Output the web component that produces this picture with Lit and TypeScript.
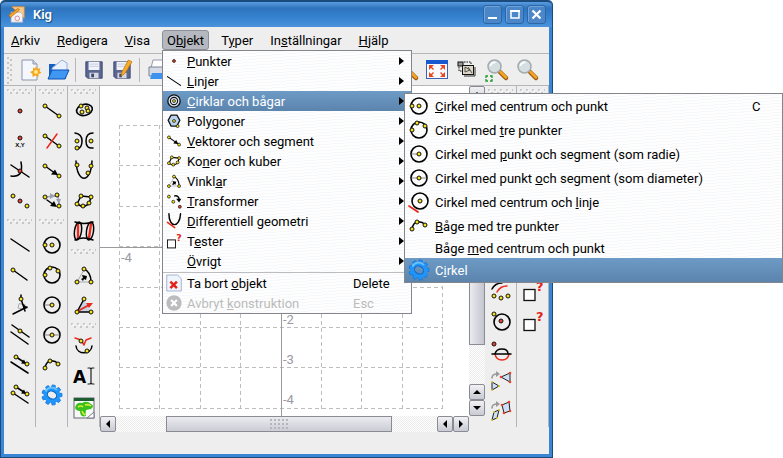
import { LitElement, html, svg, css, nothing } from "lit";
import { customElement, property } from "lit/decorators.js";

const dot = (x: number, y: number, fill = "#f5e11c") =>
  svg`<circle cx=${x} cy=${y} r="2" fill=${fill} stroke="#111" stroke-width="1"/>`;
const red = (x: number, y: number) => dot(x, y, "#e8432e");
const stroke = (d: string, color = "#000", width = 1.5) =>
  svg`<path d=${d} fill="none" stroke=${color} stroke-width=${width} stroke-linecap="round" stroke-linejoin="round"/>`;
const ring = svg`<circle cx="11" cy="11" r="8" fill="none" stroke="#000" stroke-width="1.6"/>`;
const lens = svg`
  <path d="M14 13l6 6" stroke="#9a5a10" stroke-width="4.5" stroke-linecap="round"/>
  <path d="M14.500 13l5.500 5.500" stroke="#f5a623" stroke-width="2.500" stroke-linecap="round"/>
  <circle cx="8.500" cy="7.500" r="6.500" fill="#d5dfe2" stroke="#a3abae" stroke-width="1.500"/>
  <path d="M4.500 7a4 4 0 0 1 5-3.500" fill="none" stroke="#fff" stroke-width="1.800"/>`;
const floppy = svg`
  <path d="M2 2h18v18H4l-2-2z" fill="#5b6691" stroke="#3d466b"/>
  <path d="M5 2h12v9H5z" fill="#f1f3fa"/><path d="M6 4.500h10M6 7h10" stroke="#c5cbe0"/>
  <path d="M6 14h10v6H6z" fill="#d5d8e2"/><path d="M8 15h3v4H8z" fill="#3d466b"/>`;
const teeth = [0, 40, 80, 120, 160, 200, 240, 280, 320];

const icons: Record<string, unknown> = {
  point: red(11, 11),
  pointXY: svg`${red(11, 8)}<text x="11" y="17" text-anchor="middle" font-family="Liberation Sans" font-size="6" font-weight="bold">X,Y</text>`,
  intersection: svg`${stroke("M2 5L20 17")}${stroke("M2 16Q15 18 12 2")}${red(11, 11)}`,
  midpoint: svg`${dot(4, 6)}${red(11, 11)}${dot(18, 16)}`,
  line: stroke("M2 5L20 17"),
  ray: svg`${stroke("M4 6L18 16")}${dot(4, 6)}`,
  perpendicular: svg`${stroke("M10 10l-1 4l5 1l2-4z", "#a5a9b0", 1)}${stroke("M4 20L18 13M12 5L16 17M12 1v3")}<path d="M14 10l5 4l-5 1z"/>${dot(12, 5)}`,
  parallel: svg`${stroke("M3 1L20 13M2 8L19 20")}${dot(11, 7)}`,
  parallelVector: svg`${stroke("M7 3L18 10M2 8L19 19")}<path d="M17 10l-5-.5l3-4z"/>${dot(7, 3)}${dot(18, 10)}`,
  translateVector: svg`${stroke("M7 3L18 10M4 9L19 19")}<path d="M17 10l-5-.5l3-4z"/>${dot(7, 3)}${dot(18, 10)}${dot(4, 9)}`,
  segment: svg`${stroke("M4 6L18 16")}${dot(4, 6)}${dot(18, 16)}`,
  segmentAxis: svg`${stroke("M4 6L18 16")}${stroke("M6 18L16 4", "#e92a1c")}${dot(4, 6)}${dot(18, 16)}`,
  vector: svg`${stroke("M4 6L18 16")}<path d="M17 15l-7-.5l4-5z"/>${dot(4, 6)}${dot(18, 16)}`,
  vectorSum: svg`${stroke("M4 7L15 6M17 6L18 15", "#9aa2b2")}<path d="M14 6l-5-3v6zM18 14l-3-5h5z" fill="#9aa2b2"/>${stroke("M6 10L13 15")}<path d="M16 17l-7-1l4-5z"/>${dot(4, 7)}${dot(16, 5)}${dot(18, 16)}`,
  circlePoint: svg`${ring}${dot(11, 11)}${dot(4, 11)}`,
  circleThree: svg`${ring}${dot(9, 4)}${dot(17, 7)}${dot(4, 11)}`,
  circleRadius: svg`${ring}${stroke("M4 11h7", "#888", 1)}${dot(11, 11)}`,
  circleDiameter: svg`${ring}${stroke("M4 11h14", "#888", 1)}${dot(11, 11)}`,
  circleLine: svg`<circle cx="12" cy="10" r="8" fill="none" stroke="#000" stroke-width="1.6"/>${stroke("M1 15L10 21", "#e92a1c", 1.8)}${dot(12, 10)}`,
  arc: svg`${stroke("M4 14Q5 8 9 7T18 10")}${dot(4, 14)}${dot(9, 7)}${dot(17, 10)}`,
  gear: svg`<g transform="translate(11 11)">
    ${teeth.map((a) => svg`<path d="M-2 -7l.5-3h3l.5 3z" fill="#1f96fb" stroke="#1576d8" stroke-width=".8" transform=${`rotate(${a + 10})`}/>`)}
    <ellipse rx="6.500" ry="5.500" transform="rotate(30)" fill="none" stroke="#1f96fb" stroke-width="4"/>
    <ellipse rx="4.800" ry="3.800" transform="rotate(30)" fill="none" stroke="#1565bd" stroke-width="1"/>
    <path d="M-6.500 -3.500A7 7 0 0 1 5 -5" fill="none" stroke="#6cc3ff" stroke-width="1.800"/></g>`,
  conic: svg`<ellipse cx="11.500" cy="10" rx="8" ry="5.500" transform="rotate(-15 11 10)" fill="none" stroke="#000" stroke-width="1.600"/>${dot(8, 6)}${dot(14, 8)}${dot(9, 12)}${dot(15, 11)}`,
  hyperbola: svg`${stroke("M2 3Q9 4 9 11T4 19M20 3Q13 3 13 11T20 18")}${dot(4, 11)}${dot(4, 18)}${dot(18, 11)}`,
  parabola: svg`${stroke("M3 1C4 24 18 24 19 1")}${dot(4, 5)}${dot(18, 6)}${dot(15, 13)}`,
  cubic: svg`${stroke("M8 6L18 7L16 14L10 17L4 14Z")}${dot(8, 6)}${dot(18, 7)}${dot(4, 14)}${dot(16, 13)}${dot(10, 16)}`,
  radical: svg`${stroke("M5 18V4M16 18L18 4", "#e92a1c", 2.400)}<ellipse cx="5" cy="11" rx="3.500" ry="9" transform="rotate(8 5 11)" fill="none" stroke="#000" stroke-width="1.500"/><ellipse cx="17" cy="11" rx="3.500" ry="9" transform="rotate(8 17 11)" fill="none" stroke="#000" stroke-width="1.500"/>${stroke("M2 2Q11 5 20 2M2 20Q10 16 20 20")}`,
  angle: svg`${stroke("M11 6L4 18H18", "#a5a9b0", 1)}${stroke("M11 5Q18 8 18 18")}<path d="M9 11l5 1l-1 4l-2-1l-1 2l-2-2l2-1z"/>${dot(11, 5)}${dot(4, 18)}${dot(18, 18)}`,
  angleSize: svg`<path d="M11 6L18 18H4z" fill="#c5d3e4"/>${stroke("M11 5L4 18H18")}${stroke("M5 17L16 11", "#e92a1c", 1.8)}<path d="M13 9l7 0l-4 5z" fill="#e92a1c"/>${dot(11, 5)}${dot(4, 18)}${dot(18, 18)}`,
  tangent: svg`${stroke("M2 0L8 2L11 7L13 2L18 0", "#e92a1c")}${stroke("M3 8C4 17 18 17 19 8")}${dot(8, 3)}${dot(14, 13)}`,
  text: svg`<text x="0" y="15" font-family="DejaVu Sans" font-weight="bold" font-size="17">A</text>${stroke("M15 0h2l1 1l1-1h2M18 1v14M15 16h2l1-1l1 1h2", "#222", 1.2)}`,
  python: svg`<rect x="1" y="0" width="20" height="20" fill="#f7f9f7" stroke="#667"/><path d="M1 0h20v3H1z" fill="#1d5e31"/>
    <path d="M2 10Q3 4 9 5Q14 2 18 6Q22 8 18 11L13 12Q12 16 13 18Q7 20 7 13Q3 13 2 10" fill="#39bf1e"/><path d="M12 7q4-1 6 1M5 9q3-2 5 0M9 13q1 3 3 4" fill="none" stroke="#d9ec37" stroke-width="1.600"/><path d="M14 20l7-6v6z" fill="#fff" stroke="#778"/>`,
  mapArc: svg`${stroke("M2 9Q5 3 12 3")}${stroke("M7 12Q10 6 17 6", "#e92a1c")}${dot(4, 16)}${dot(11, 18)}${dot(18, 16)}`,
  mapCircle: svg`<circle cx="12" cy="12" r="8" fill="none" stroke="#000" stroke-width="1.600"/>${dot(4, 4)}${red(11, 11)}`,
  project: svg`${stroke("M5 14Q6 20 12 20T19 14", "#e92a1c")}${stroke("M5 14Q6 9 12 9T18 14M2 14H21")}${red(4, 4)}`,
  rotate: svg`${stroke("M2 8Q2 4 7 4", "#999", 1.6)}<path d="M6 1l4 3l-4 3z" fill="#999"/>
    <path d="M11 7L20 3V12zM2 12L9 16L2 20z" fill="#cfdff5" stroke="#222"/>${[[11, 7], [20, 3], [20, 12]].map(([x, y]) => svg`<circle cx=${x} cy=${y} r="1.300" fill="#e8432e"/>`)}${[[2, 12], [9, 16], [2, 20]].map(([x, y]) => svg`<circle cx=${x} cy=${y} r="1" fill="#d8c61c"/>`)}`,
  affine: svg`${stroke("M2 8Q2 4 7 4", "#999", 1.6)}<path d="M6 1l4 3l-4 3z" fill="#999"/>
    <path d="M12 5L19 2L20 11L14 13zM4 12L9 10L7 18L2 20z" fill="#cfdff5" stroke="#222"/>${[[12, 5], [19, 2], [20, 11], [14, 13]].map(([x, y]) => svg`<circle cx=${x} cy=${y} r="1.300" fill="#e8432e"/>`)}${[[4, 12], [9, 10], [7, 18], [2, 20]].map(([x, y]) => svg`<circle cx=${x} cy=${y} r="1" fill="#d8c61c"/>`)}`,
  test: svg`<rect x="2" y="9.500" width="11" height="11" fill="#fff" stroke="#111" stroke-width="1.300"/><text x="14" y="11" font-family="DejaVu Sans" font-size="13" font-weight="bold" fill="#e3221a">?</text>`,
  circles: svg`<circle cx="11" cy="11" r="8.500" fill="#d8e4f3" stroke="#111" stroke-width="1.800"/><circle cx="11" cy="11" r="5" fill="none" stroke="#111" stroke-width="1.500"/>${dot(11, 11)}`,
  polygon: svg`<path d="M7 3L15 3L19 10L15 18L7 18L3 10Z" fill="#b9d3f0" stroke="#111" stroke-width="1.800"/>${dot(11, 11)}${dot(16, 18)}`,
  transform: svg`${dot(4, 5)}${dot(10, 12)}${red(19, 19)}${stroke("M12 4Q17 3 18 8", "#000", 2)}<path d="M14 8h7l-3 5z"/>`,
  differential: svg`${stroke("M4 1C4 21 19 21 20 1", "#000", 2)}${stroke("M2 13L12 20", "#e92a1c", 2.2)}`,
  remove: svg`<path d="M1 0h15l5 5v17H1z" fill="#eef4fc" stroke="#8d9cc0"/><path d="M6 9l9 9M15 9l-9 9" stroke="#e3221a" stroke-width="3.500"/>`,
  cancel: svg`<circle cx="11" cy="11" r="10.500" fill="#bcbcbc"/><path d="M7 7l8 8M15 7l-8 8" stroke="#fff" stroke-width="3"/>`,
  none: nothing,
  fileNew: svg`<path d="M3 1h11l4 4v16H3z" fill="#f4f7fd" stroke="#8d95a8"/><path d="M14 1v4h4" fill="#ccd5e6" stroke="#8d95a8"/>
    <path d="M17 7l1.500 3l3-1l-1 3l2 2l-3 1v3l-3-1.500l-3 1.500v-3l-2.500-2l3-1.500v-3l2 1z" fill="#f7a71c"/><circle cx="17" cy="13" r="2" fill="#ffe98a"/>`,
  fileOpen: svg`<path d="M2 20V5h6l2 2h9v13z" fill="#1660c4"/><path d="M5 9L15 1l5 3v9H5z" fill="#e8f1fd" stroke="#7c9fd0" stroke-width=".8"/><path d="M1 20L5 11h17l-4 9z" fill="#3f97f2" stroke="#0c50b4"/>`,
  save: floppy,
  saveAs: svg`${floppy}<path d="M18 0l4 2l-8 13l-4 3l1-5z" fill="#f8ab24" stroke="#b36c0a" stroke-width=".7"/>`,
  print: svg`<path d="M6 1h12l-2 8H4z" fill="#fff" stroke="#99a"/><path d="M2 8h18v9H2z" fill="#d6dbe6" stroke="#7a8194"/><path d="M5 14h12l2 6H3z" fill="#3b93ee"/>`,
  zoom: lens,
  fullscreen: svg`<rect x=".5" y="1.500" width="21" height="18" fill="#f8f9fc" stroke="#3b62b0"/><path d="M0 1h22v4H0z" fill="#1859cf"/>
    <path d="M3 6h5L6 8l2 2l-1 1l-2-2l-2 2zM19 6h-5l2 2l-2 2l1 1l2-2l2 2zM3 18h5l-2-2l2-2l-1-1l-2 2l-2-2zM19 18h-5l2-2l-2-2l1-1l2 2l2-2z" fill="#e8481f"/>`,
  showHidden: svg`<rect x="2" y="3" width="5" height="4" fill="#999" stroke="#111"/><path d="M8 3h7v3M3 8v4h4" fill="none" stroke="#111" stroke-dasharray="1.500 1"/><rect x="6.500" y="6.500" width="11" height="9" fill="#ddd6c6" stroke="#111"/><path d="M9 8v5l5-2zM12 8l4 6" fill="none" stroke="#333" stroke-width=".8"/><path d="M8 17h11V8" fill="none" stroke="#333"/>`,
  zoomArea: svg`${lens}<path d="M0 19v-2h2M4 17h2v2M0 20v2h2M4 22h2v-2" fill="none" stroke="#1d9a2c" stroke-width="1.300"/>`,
};

const icon = (name: string) =>
  html`<svg class="icon" viewBox="0 0 22 22" aria-hidden="true">${icons[name]}</svg>`;

/** Turns "A&rkiv" into a label whose marked letter is underlined. */
const label = (text: string) => {
  const i = text.indexOf("&");
  return i < 0 ? html`${text}` : html`${text.slice(0, i)}<u>${text[i + 1]}</u>${text.slice(i + 2)}`;
};

interface Entry {
  icon: string;
  text: string;
  key?: string;
  kind?: "arrow" | "slim" | "disabled";
  open?: boolean;
}

const circleMenu: Entry[] = [
  { icon: "circlePoint", text: "&Cirkel med centrum och punkt", key: "C" },
  { icon: "circleThree", text: "Cirkel med &tre punkter" },
  { icon: "circleRadius", text: "Cirkel med &punkt och segment (som radie)" },
  { icon: "circleDiameter", text: "Cirkel med punkt &och segment (som diameter)" },
  { icon: "circleLine", text: "Cirkel med centrum och &linje" },
  { icon: "arc", text: "&Båge med tre punkter" },
  { icon: "none", text: "Båge &med centrum och punkt", kind: "slim" },
  { icon: "gear", text: "C&irkel", open: true },
];

const objectMenu: Entry[] = [
  { icon: "point", text: "&Punkter", kind: "arrow" },
  { icon: "line", text: "&Linjer", kind: "arrow" },
  { icon: "circles", text: "&Cirklar och bågar", kind: "arrow", open: true },
  { icon: "polygon", text: "Poly&goner", kind: "arrow" },
  { icon: "vector", text: "&Vektorer och segment", kind: "arrow" },
  { icon: "cubic", text: "Ko&ner och kuber", kind: "arrow" },
  { icon: "angle", text: "Vinkl&ar", kind: "arrow" },
  { icon: "transform", text: "&Transformer", kind: "arrow" },
  { icon: "differential", text: "&Differentiell geometri", kind: "arrow" },
  { icon: "test", text: "T&ester", kind: "arrow" },
  { icon: "none", text: "&Övrigt", kind: "arrow" },
];
const objectActions: Entry[] = [
  { icon: "remove", text: "Ta bort &objekt", key: "Delete" },
  { icon: "cancel", text: "Avbryt &konstruktion", key: "Esc", kind: "disabled" },
];

const iconStyle = css`
  .icon { display: block; width: 22px; height: 22px; overflow: visible; flex: none; }
  button { font: inherit; color: inherit; border: 0; padding: 0; margin: 0; background: none; text-align: left; }
`;

@customElement("kig-menu")
class KigMenu extends LitElement {
  @property({ type: Boolean, reflect: true }) roomy = false;
  @property({ attribute: false }) groups: Entry[][] = [];

  static styles = [iconStyle, css`
    :host {
      display: block; box-sizing: border-box; border: 1px solid #85868c;
      background: repeating-linear-gradient(176deg, #fefefe 0 2px, #f7f8f9 2px 3px);
      color: #000;
    }
    .row { position: relative; }
    .item {
      display: flex; align-items: center; width: 100%; height: 20px;
      padding: 0 7px 0 3px; gap: 5px; white-space: nowrap;
    }
    .item .icon { width: 16px; height: 16px; }
    .name { flex: 1; }
    .name, .key { padding-top: 2px; }
    .key { width: 38px; margin-right: 13px; }
    .open { background: linear-gradient(#6d9bc6, #5c84ad); color: #fff; }
    .disabled { color: #bbb; }
    .chevron { border: 4px solid transparent; border-left: 5px solid #000; border-right: 0; }
    .group + .group { border-top: 1px solid #bdbdc1; margin-top: 1px; }
    :host([roomy]) .item { height: 24px; padding-left: 3px; }
    :host([roomy]) .item.slim { height: 20px; }
    :host([roomy]) .item .icon { width: 22px; height: 22px; }
    :host([roomy]) .key { width: 10px; }
    .sub { position: absolute; left: calc(100% - 7px); top: 2px; width: 379px; z-index: 1; }
  `];

  render() {
    return this.groups.map((group) => html`<div class="group">${group.map((e) => html`
      <div class="row">
        <button class="item ${e.kind ?? ""} ${e.open ? "open" : ""}" ?disabled=${e.kind === "disabled"}>
          ${icon(e.icon)}<span class="name">${label(e.text)}</span>
          ${e.key ? html`<span class="key">${e.key}</span>` : nothing}
          ${e.kind === "arrow" ? html`<span class="chevron"></span>` : nothing}
        </button>
        ${e.kind === "arrow" && e.open ? html`<kig-menu class="sub" roomy .groups=${[circleMenu]}></kig-menu>` : nothing}
      </div>`)}</div>`);
  }
}

@customElement("kig-palette")
class KigPalette extends LitElement {
  @property({ attribute: false }) groups: string[][] = [];

  static styles = [iconStyle, css`
    :host { display: block; width: 31px; flex: none; border-right: 1px solid #b3b4b8; margin-bottom: 5px; }
    .grip { display: block; height: 14px; padding: 0 3px; }
    .grip svg { display: block; width: 100%; height: 14px; }
    .group:first-child .grip, .group:first-child svg.dots { height: 10px; }
    .tool { display: flex; align-items: center; justify-content: center; width: 100%; height: 30px; }
  `];

  render() {
    return this.groups.map((group) => html`<div class="group">
      <div class="grip"><svg class="dots" aria-hidden="true">
        <path d="M0 4h27M3 7h24" stroke="#c6c6c8" stroke-width="2" stroke-dasharray="2 4" fill="none"/>
        <path d="M1 5h26" stroke="#fff" stroke-dasharray="2 4" fill="none"/></svg></div>
      ${group.map((name) => html`<button class="tool" aria-label=${name}>${icon(name)}</button>`)}
    </div>`);
  }
}

const columns = [0, 1, 2, 3, 4, 5, 6, 7, 8].map((i) => Math.round(i * 40.4) + 19.5);
const rows = [0, 1, 2, 3, 4, 5, 6, 7].map((i) => Math.round(i * 40.4) + 39.5);

@customElement("app-root")
class AppRoot extends LitElement {
  static styles = [iconStyle, css`
    :host { display: block; min-height: 100vh; background: #fff; overflow: hidden; font: 13px/20px Roboto, "Noto Sans", sans-serif; color: #000; }
    .window {
      display: flex; flex-direction: column; box-sizing: border-box; min-height: 100vh;
      width: calc(100% - 230px); border: 1px solid #1b4a7c; border-top: 0; border-radius: 5px 5px 0 0;
      background: #3a86d4; padding: 0 3px 3px;
    }
    .title {
      display: flex; align-items: center; gap: 3px; height: 27px; margin: 0 -3px; padding: 0 6px 0 7px;
      box-sizing: border-box; border-top: 2px solid #1b4a7c; border-radius: 5px 5px 0 0;
      background: linear-gradient(#5a9ce0, #2f74bd 25%, #3581cf 60%, #4a93dc); color: #fff;
    }
    .title .icon { width: 17px; height: 17px; }
    .title h1 { flex: 1; margin: 0 0 0 5px; font-size: 13px; font-weight: 600; text-shadow: 1px 1px 1px #1b4a7c; }
    .title button { width: 19px; height: 19px; border-radius: 3px; background: #4a86c8; border: 1px solid #2b67a8; box-shadow: inset 1px 1px #6fa3d9; }
    .title button svg { display: block; width: 17px; height: 17px; }
    .body { flex: 1; display: flex; flex-direction: column; background: #eeeeef; }
    .menubar { display: flex; align-items: center; gap: 7px; height: 26px; padding-left: 2px; }
    .entry { position: relative; }
    .entry > button { display: block; padding: 1px 4px 0; line-height: 17px; border: 1px solid transparent; border-radius: 3px; }
    .entry > .active { background: #b5b8bf; border-color: #8d9097; }
    .popup { position: absolute; left: 0; top: 100%; width: 250px; z-index: 2; }
    .toolbar { display: flex; align-items: center; height: 33px; box-sizing: border-box; border-top: 1px solid #b5b6b9; border-bottom: 1px solid #b5b6b9; padding: 0 8px 0 3px; }
    .grip { width: 5px; height: 28px; margin-right: 4px; flex: none; }
    .toolbar button { display: flex; justify-content: center; width: 28px; flex: none; }
    .toolbar .small .icon { width: 20px; height: 20px; }
    .toolbar hr { width: 1px; height: 24px; border: 0; margin: 0 4px 0 3px; background: #b5b6b9; flex: none; }
    .right { display: flex; gap: 2px; margin-left: auto; }
    .work { display: flex; }
    .view { flex: 1; min-width: 0; display: grid; grid-template-columns: 1fr 16px; grid-template-rows: 330px 16px; }
    .canvas { display: block; width: 100%; height: 330px; background: #fff; box-sizing: border-box; }
    .canvas text { font-size: 13px; fill: #9a9aa0; }
    .bar { display: flex; background: repeating-conic-gradient(#fff 0 25%, #ebebec 0 50%) 0 0 / 2px 2px; }
    .vertical { flex-direction: column; }
    .bar button {
      display: flex; align-items: center; justify-content: center; width: 16px; height: 16px; flex: none; box-sizing: border-box;
      border: 1px solid #8b8c93; border-radius: 2px; background: linear-gradient(#f2f2f5, #c9cad2);
    }
    .thumb { display: flex; align-items: center; justify-content: center; box-sizing: border-box; border: 1px solid #8b8c93; background: linear-gradient(#ebebf0, #cbccd5); }
    .horizontal .thumb { flex: 226; }
    .vertical .thumb { flex: 243; background: linear-gradient(90deg, #ebebf0, #c4c5cf); }
    .gap-left { flex: 50; }
    .gap-right { flex: 45; }
    .gap-below { flex: 39; }
    .ridges { width: 18px; height: 10px; background: radial-gradient(circle at 1px 1px, #b4b5be 1px, transparent 1px) 0 0 / 4px 4px; }
  `];

  private arrow(d: string, name: string) {
    return html`<button aria-label=${name}><svg width="8" height="8" viewBox="0 0 8 8"><path d=${d}/></svg></button>`;
  }

  private tools(names: string[], cls = "") {
    return names.map((n) => html`<button class=${cls} aria-label=${n}>${icon(n)}</button>`);
  }

  render() {
    return html`<div class="window">
      <header class="title">
        <svg class="icon" viewBox="0 0 22 22" aria-hidden="true"><path d="M5 1h16v15z" fill="#f7c98a" stroke="#e08a2a"/><path d="M4 8h12l3 3v10H4z" fill="#f3f3f6" stroke="#b7b2ba"/><circle cx="12" cy="16" r="3" fill="none" stroke="#c78"/><path d="M1 12L13 3l2 2L3 15z" fill="#f5a623" stroke="#b3590c" stroke-width=".8"/></svg>
        <h1>Kig</h1>
        <button aria-label="Minimera"><svg viewBox="0 0 17 17"><path d="M4 12h9" stroke="#fff" stroke-width="2"/></svg></button>
        <button aria-label="Maximera"><svg viewBox="0 0 17 17"><path d="M5 5h8v7H5z" fill="none" stroke="#fff" stroke-width="1.500"/><path d="M4 5h10" stroke="#fff" stroke-width="2"/></svg></button>
        <button aria-label="Stäng"><svg viewBox="0 0 17 17"><path d="M4.500 4.500l8 8M12.500 4.500l-8 8" stroke="#fff" stroke-width="2.200"/></svg></button>
      </header>
      <div class="body">
        <nav class="menubar">
          ${["&Arkiv", "&Redigera", "&Visa", "O&bjekt", "T&yper", "In&ställningar", "&Hjälp"].map((t) => html`
            <div class="entry"><button class=${t === "O&bjekt" ? "active" : ""}>${label(t)}</button>
            ${t === "O&bjekt" ? html`<kig-menu class="popup" .groups=${[objectMenu, objectActions]}></kig-menu>` : nothing}</div>`)}
        </nav>
        <div class="toolbar">
          <svg class="grip" aria-hidden="true"><path d="M1 1v27M4 3v25" stroke="#c6c6c8" stroke-width="2" stroke-dasharray="2 3"/></svg>
          ${this.tools(["fileNew", "fileOpen"])}<hr>${this.tools(["save", "saveAs"], "small")}<hr>${this.tools(["print"])}
          <div class="right">${this.tools(["zoom", "fullscreen", "showHidden", "zoomArea", "zoom"])}</div>
        </div>
        <div class="work">
          <kig-palette .groups=${[["point", "pointXY", "intersection", "midpoint"], ["line", "ray", "perpendicular", "parallel", "parallelVector", "translateVector"]]}></kig-palette>
          <kig-palette .groups=${[["segment", "segmentAxis", "vector", "vectorSum"], ["circlePoint", "circleThree", "circleRadius", "circleDiameter", "arc", "gear"]]}></kig-palette>
          <kig-palette .groups=${[["conic", "hyperbola", "parabola", "cubic", "radical"], ["angle", "angleSize"], ["tangent", "text", "python"]]}></kig-palette>
          <main class="view">
            <svg class="canvas">
              <g stroke="#bdbdbd" stroke-dasharray="4 3">
                ${columns.map((x) => svg`<path d=${`M${x} 39V323`}/>`)}
                ${rows.map((y) => svg`<path d=${`M19 ${y}H343`}/>`)}
              </g>
              <path d="M181.500 0V330M0 161.500H369" stroke="#9b9b9f"/>
              <text x="21" y="176">-4</text><text x="183" y="238">-2</text><text x="183" y="278">-3</text><text x="183" y="318">-4</text>
            </svg>
            <div class="bar vertical">
              ${this.arrow("M4 2L8 6H0z", "Upp")}<div class="thumb"></div><div class="gap-below"></div>
              ${this.arrow("M4 2L8 6H0z", "Upp")}${this.arrow("M0 2H8L4 6z", "Ned")}
            </div>
            <div class="bar horizontal">
              ${this.arrow("M2 4L6 0V8z", "Vänster")}<div class="gap-left"></div><div class="thumb"><span class="ridges"></span></div><div class="gap-right"></div>
              ${this.arrow("M2 4L6 0V8z", "Vänster")}${this.arrow("M2 0L6 4L2 8z", "Höger")}
            </div>
          </main>
          <kig-palette .groups=${[["rotate", "rotate", "rotate", "rotate", "rotate", "rotate", "mapArc", "mapCircle", "project", "rotate", "affine"]]}></kig-palette>
          <kig-palette .groups=${[["rotate", "rotate", "rotate", "rotate", "rotate", "rotate", "test", "test"]]}></kig-palette>
        </div>
      </div>
    </div>`;
  }
}
